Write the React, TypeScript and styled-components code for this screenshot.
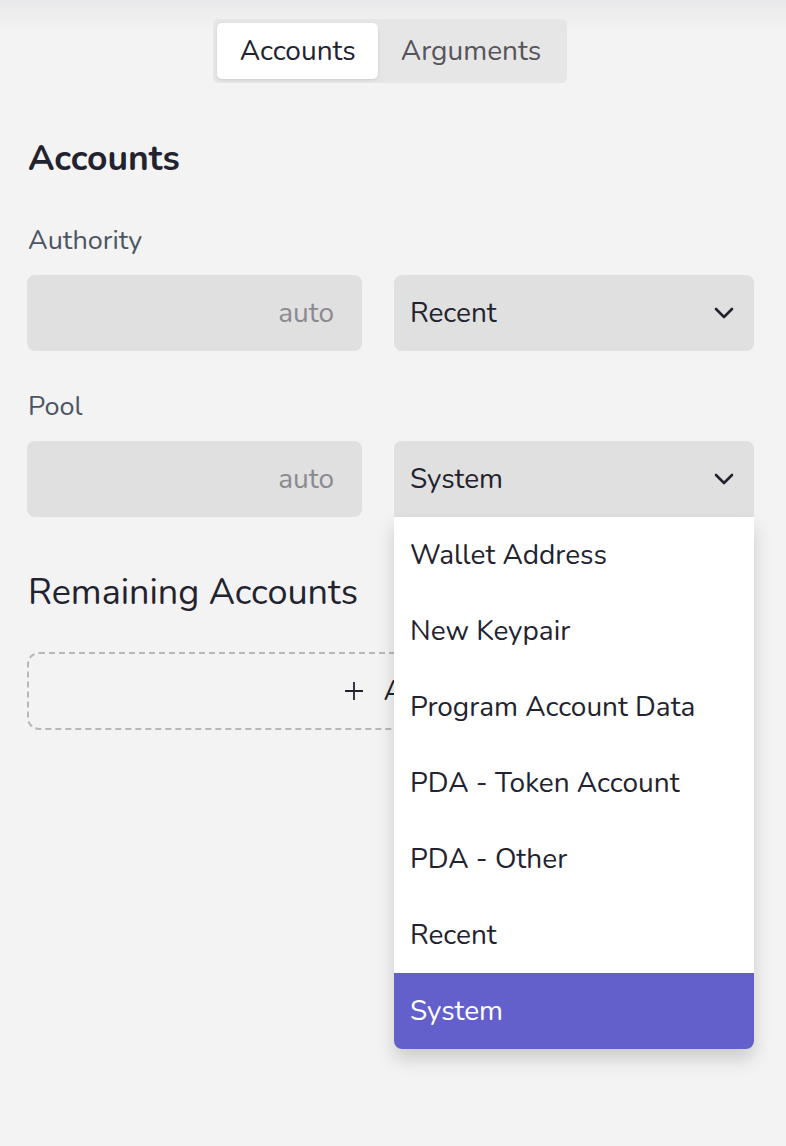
import React from "react";
import styled, { createGlobalStyle } from "styled-components";

const Global = createGlobalStyle`
  html, body { margin: 0; padding: 0; }
  body {
    background: #f3f3f3;
    font-family: "Nunito", "Lato", "Noto Sans", sans-serif;
    color: #23232f;
  }
`;

const Page = styled.div`
  min-height: 1146px;
  box-sizing: border-box;
  padding: 19px 33px 0 27px;
  background: linear-gradient(#e9e9eb 0px, #f3f3f3 32px);
`;

const TabWrap = styled.div`
  display: flex;
  justify-content: center;
`;

const TabBar = styled.div`
  display: flex;
  padding: 4px;
  background: #e6e6e6;
  border-radius: 5px;
`;

const Tab = styled.div<{ $active?: boolean }>`
  height: 56px;
  display: flex;
  align-items: center;
  justify-content: center;
  padding: 0 22px 0 23px;
  font-size: 28px;
  border-radius: 5px;
  color: ${(p) => (p.$active ? "#23232f" : "#55555b")};
  background: ${(p) => (p.$active ? "#ffffff" : "transparent")};
  box-shadow: ${(p) => (p.$active ? "0 1px 3px rgba(0,0,0,0.12)" : "none")};
`;

const Heading = styled.h2`
  margin: 56px 0 0 1px;
  font-size: 35.5px;
  font-weight: 700;
  line-height: 40px;
  color: #23232f;
`;

const Label = styled.div<{ $top?: number }>`
  margin: ${(p) => p.$top ?? 46}px 0 18px 1px;
  font-size: 27px;
  line-height: 32px;
  color: #4b5563;
`;

const Row = styled.div`
  display: grid;
  grid-template-columns: 335px 360px;
  column-gap: 32px;
`;

const AutoField = styled.div`
  height: 76px;
  background: #e0e0e0;
  border-radius: 8px;
  display: flex;
  align-items: center;
  justify-content: flex-end;
  padding-right: 28px;
  font-size: 28px;
  color: #8a8a90;
`;

const SelectWrap = styled.div`
  position: relative;
`;

const SelectBox = styled.div<{ $open?: boolean }>`
  height: 76px;
  background: #e0e0e0;
  border-radius: ${(p) => (p.$open ? "8px 8px 0 0" : "8px")};
  display: flex;
  align-items: center;
  justify-content: space-between;
  padding: 0 20px 0 16px;
  font-size: 28px;
  color: #23232f;
`;

const Menu = styled.div`
  position: absolute;
  top: 76px;
  left: 0;
  right: 0;
  z-index: 5;
  background: #ffffff;
  border-radius: 0 0 8px 8px;
  overflow: hidden;
  box-shadow: 0 10px 18px rgba(0, 0, 0, 0.16);
`;

const MenuItem = styled.div<{ $selected?: boolean }>`
  height: 76px;
  display: flex;
  align-items: center;
  padding-left: 16px;
  font-size: 28px;
  color: ${(p) => (p.$selected ? "#ffffff" : "#23232f")};
  background: ${(p) => (p.$selected ? "#6360cc" : "#ffffff")};
`;

const SubHeading = styled.h2`
  margin: 56px 0 0 1px;
  font-size: 36px;
  font-weight: 400;
  line-height: 40px;
  color: #23232f;
`;

const AddBox = styled.div`
  margin-top: 39px;
  height: 78px;
  box-sizing: border-box;
  border: 2px dashed #b8b8b8;
  border-radius: 12px;
  display: flex;
  align-items: center;
  justify-content: center;
  gap: 20px;
  font-size: 28px;
  color: #23232f;
`;

const Chevron = () => (
  <svg width="20" height="12" viewBox="0 0 20 12" fill="none" stroke="#23232f" strokeWidth="2.6" strokeLinecap="round" strokeLinejoin="round">
    <path d="M2 2l8 8 8-8" />
  </svg>
);

const Plus = () => (
  <svg width="20" height="20" viewBox="0 0 20 20" fill="none" stroke="#23232f" strokeWidth="1.8">
    <path d="M10 1v18M1 10h18" />
  </svg>
);

const options = [
  "Wallet Address",
  "New Keypair",
  "Program Account Data",
  "PDA - Token Account",
  "PDA - Other",
  "Recent",
  "System",
];

export default function App() {
  return (
    <>
      <Global />
      <Page>
        <TabWrap>
          <TabBar>
            <Tab $active>Accounts</Tab>
            <Tab>Arguments</Tab>
          </TabBar>
        </TabWrap>
        <Heading>Accounts</Heading>
        <Label>Authority</Label>
        <Row>
          <AutoField>auto</AutoField>
          <SelectWrap>
            <SelectBox>
              <span>Recent</span>
              <Chevron />
            </SelectBox>
          </SelectWrap>
        </Row>
        <Label $top={40}>Pool</Label>
        <Row>
          <AutoField>auto</AutoField>
          <SelectWrap>
            <SelectBox $open>
              <span>System</span>
              <Chevron />
            </SelectBox>
            <Menu>
              {options.map((o) => (
                <MenuItem key={o} $selected={o === "System"}>
                  {o}
                </MenuItem>
              ))}
            </Menu>
          </SelectWrap>
        </Row>
        <SubHeading>Remaining Accounts</SubHeading>
        <AddBox>
          <Plus />
          <span>Add</span>
        </AddBox>
      </Page>
    </>
  );
}
